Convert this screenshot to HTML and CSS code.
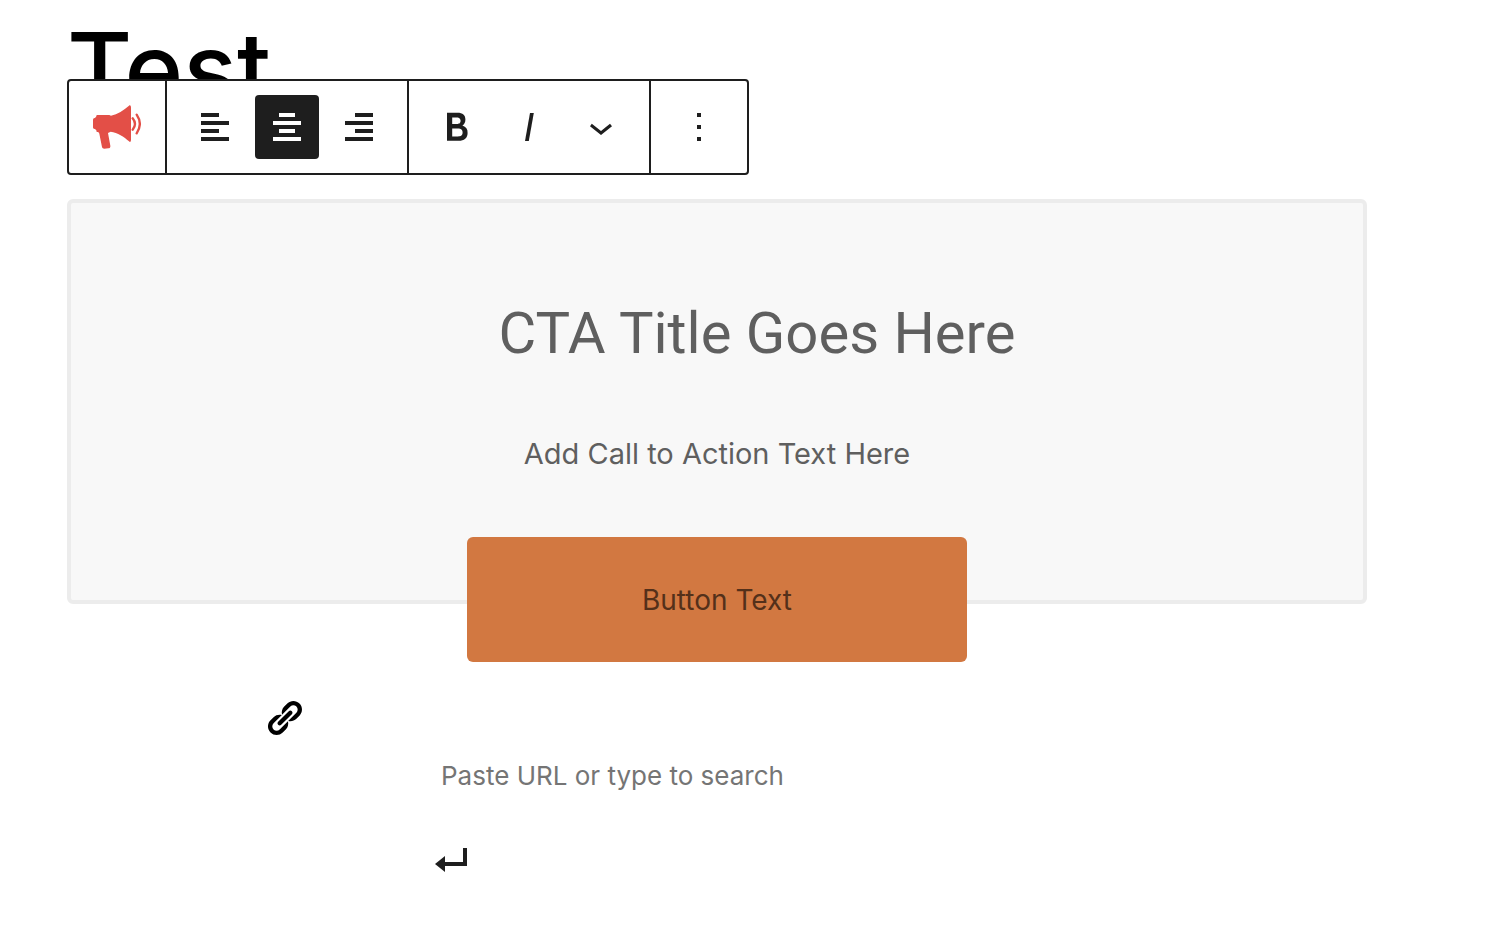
FILE: index.html
```
<!DOCTYPE html>
<html lang="en">
<head>
<meta charset="utf-8">
<title>Test</title>
<link rel="stylesheet" href="styles.css">
</head>
<body>
<main class="editor">
  <h1 class="post-title">Test</h1>

  <div class="toolbar" role="toolbar" aria-label="Block tools">
    <div class="group">
      <button class="tool" type="button" aria-label="Call to action">
        <svg class="icon" viewBox="129 279 144 144" aria-hidden="true">
          <path fill="#e34f47" d="M237 287C241 284 243 288 243 293V389C243 394 241 398 237 394C222 380 203 368 182 365L174 369L181 407C182 412 179 415 175 415L163 416C159 416 157 414 156 411L148 371C147 367 144 366 140 366C140 362 138 358 134 357C131 357 129 355 129 352V330C129 326 131 325 134 324C138 322 139 319 140 315H178L183 317C203 312 221 301 237 287Z"/>
          <path fill="none" stroke="#e34f47" stroke-width="7" stroke-linecap="round" d="M248 325Q262 342 248 359M260 314Q279 342 260 370"/>
        </svg>
      </button>
    </div>
    <div class="group">
      <button class="tool" type="button" aria-label="Align text left">
        <svg class="icon" viewBox="0 0 24 24" aria-hidden="true"><path d="M5 5h9v2H5zM5 9h14v2H5zM5 13h9v2H5zM5 17h14v2H5z"/></svg>
      </button>
      <button class="tool tool-active" type="button" aria-label="Align text center" aria-pressed="true">
        <svg class="icon" viewBox="0 0 24 24" aria-hidden="true"><path d="M8 5h8v2H8zM5 9h14v2H5zM8 13h8v2H8zM5 17h14v2H5z"/></svg>
      </button>
      <button class="tool" type="button" aria-label="Align text right">
        <svg class="icon" viewBox="0 0 24 24" aria-hidden="true"><path d="M10 5h9v2h-9zM5 9h14v2H5zM10 13h9v2h-9zM5 17h14v2H5z"/></svg>
      </button>
    </div>
    <div class="group">
      <button class="tool" type="button" aria-label="Bold">
        <svg class="icon" viewBox="0 0 24 24" aria-hidden="true"><path d="M14.7 11.3c1-.6 1.5-1.6 1.5-3 0-2.3-1.3-3.4-4-3.4H7v14h5.8c1.4 0 2.5-.3 3.3-1 .8-.7 1.2-1.7 1.2-2.9.1-1.9-.8-3.1-2.6-3.7zm-5.1-4h2.3c.6 0 1.1.1 1.4.4.3.3.5.7.5 1.2s-.2 1-.5 1.2c-.3.3-.8.4-1.4.4H9.6V7.3zm4.6 9c-.4.3-1 .4-1.7.4H9.6v-3.9h2.9c.7 0 1.3.2 1.7.5.4.3.6.8.6 1.5s-.2 1.2-.6 1.5z"/></svg>
      </button>
      <button class="tool" type="button" aria-label="Italic">
        <svg class="icon" viewBox="0 0 24 24" aria-hidden="true"><path d="M12.5 5L10 19h1.9l2.5-14z"/></svg>
      </button>
      <button class="tool" type="button" aria-label="More formatting">
        <svg class="icon" viewBox="0 0 24 24" aria-hidden="true"><path d="M17.5 11.6L12 16l-5.5-4.4.9-1.2L12 14l4.5-3.6 1 1.2z"/></svg>
      </button>
    </div>
    <div class="group">
      <button class="tool" type="button" aria-label="Options">
        <svg class="icon" viewBox="0 0 24 24" aria-hidden="true"><path d="M13 19h-2v-2h2v2zm0-6h-2v-2h2v2zm0-6h-2V5h2v2z"/></svg>
      </button>
    </div>
  </div>

  <section class="cta">
    <h2 class="cta-title">CTA Title Goes Here</h2>
    <p class="cta-text">Add Call to Action Text Here</p>
    <button class="cta-button" type="button">Button Text</button>
  </section>

  <form class="link-form">
    <label class="link-label" for="cta-url" aria-label="Link">
      <svg class="link-icon" viewBox="0 0 20 20" aria-hidden="true"><path d="M17.74 2.76c1.68 1.69 1.68 4.41 0 6.1l-1.53 1.52c-1.12 1.12-2.7 1.47-4.14 1.09l2.62-2.61.76-.77.76-.76c.84-.84.84-2.2 0-3.04-.84-.85-2.2-.85-3.04 0l-.77.76-3.38 3.38c-.37-1.44-.02-3.02 1.1-4.14l1.52-1.53c1.69-1.68 4.42-1.68 6.1 0zM8.59 13.43l5.34-5.34c.42-.42.42-1.1 0-1.52-.44-.43-1.13-.39-1.53 0l-5.33 5.34c-.42.42-.42 1.1 0 1.52.44.43 1.13.39 1.52 0zm-.76 2.29l4.14-4.15c.38 1.44.03 3.02-1.09 4.14l-1.52 1.53c-1.69 1.68-4.41 1.68-6.1 0-1.68-1.68-1.68-4.42 0-6.1l1.53-1.52c1.12-1.12 2.7-1.47 4.14-1.1l-4.14 4.15c-.85.84-.85 2.2 0 3.05.84.84 2.2.84 3.04 0z"/></svg>
    </label>
    <div class="link-fields">
      <input class="link-input" id="cta-url" type="text" placeholder="Paste URL or type to search">
      <button class="link-submit" type="submit" aria-label="Apply">
        <svg class="link-icon" viewBox="0 0 20 20" aria-hidden="true"><path d="M16 4h2v9H7v3l-5-4 5-4v3h9V4z"/></svg>
      </button>
    </div>
  </form>
</main>
</body>
</html>
```
FILE: styles.css
```
* {
  box-sizing: border-box;
}

body {
  margin: 0;
  background: #fff;
  color: #1e1e1e;
  font-family: Inter, Roboto, "Liberation Sans", sans-serif;
}

button {
  padding: 0;
  border: 0;
  background: none;
  color: inherit;
  font: inherit;
  cursor: pointer;
}

svg {
  display: block;
  fill: currentColor;
}

.editor {
  padding: 9px 123px 40px 67px;
}

.post-title {
  margin: 0;
  color: #000;
  font-size: 100px;
  font-weight: 500;
  line-height: 120px;
}

.toolbar {
  position: relative;
  display: flex;
  width: fit-content;
  margin-top: -50px;
  border: 2px solid #1e1e1e;
  border-radius: 4px;
  background: #fff;
}

.group {
  display: flex;
  padding: 14px 12px;
}

.group + .group {
  border-left: 2px solid #1e1e1e;
}

.tool {
  display: flex;
  align-items: center;
  justify-content: center;
  width: 64px;
  height: 64px;
  margin: 0 4px;
  border-radius: 4px;
}

.tool-active {
  background: #1e1e1e;
  color: #fff;
}

.icon {
  width: 48px;
  height: 48px;
}

.cta {
  display: flex;
  flex-direction: column;
  align-items: center;
  margin-top: 24px;
  border: 4px solid #ececec;
  border-radius: 6px;
  background: #f8f8f8;
  color: #5f5f5f;
}

.cta-title {
  margin: 94px 0 0;
  padding-left: 80px;
  font-family: Roboto, "Liberation Sans", sans-serif;
  font-size: 58px;
  font-weight: 400;
  line-height: 72px;
}

.cta-text {
  margin: 63px 0 0;
  font-size: 29px;
  line-height: 44px;
}

.cta-button {
  width: 500px;
  max-width: 100%;
  height: 125px;
  margin: 61px 0 -62px;
  border-radius: 6px;
  background: #d27841;
  color: #54301a;
  font-size: 28px;
}

.link-form {
  margin: 94px 0 0 197px;
}

.link-label {
  display: block;
  width: fit-content;
  color: #000;
}

.link-fields {
  display: flex;
  flex-direction: column;
  align-items: flex-start;
  gap: 41px;
  padding: 13px 0 0 167px;
}

.link-input {
  width: 400px;
  height: 48px;
  padding: 0 10px;
  border: 0;
  background: transparent;
  color: #1e1e1e;
  font-family: inherit;
  font-size: 26px;
}

.link-input::placeholder {
  color: #757575;
  opacity: 1;
}

.link-icon {
  width: 40px;
  height: 40px;
}
```
